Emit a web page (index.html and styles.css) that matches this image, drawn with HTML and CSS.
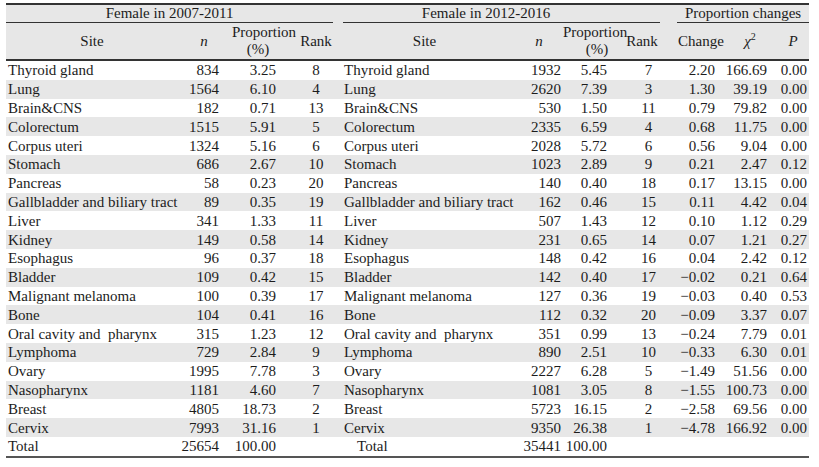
FILE: index.html
```html
<!DOCTYPE html>
<html>
<head>
<meta charset="utf-8">
<link rel="stylesheet" href="styles.css">
</head>
<body>
<table class="tbl">
<colgroup>
<col class="w1"><col class="w2"><col class="w3"><col class="w4">
<col class="w5"><col class="w6"><col class="w7"><col class="w8">
<col class="w9"><col class="w10"><col class="w11">
</colgroup>
<thead>
<tr class="grp">
<th colspan="4"><div class="rule g1">Female in 2007-2011</div></th>
<th colspan="4"><div class="rule g2">Female in 2012-2016</div></th>
<th colspan="3"><div class="rule g3">Proportion changes</div></th>
</tr>
<tr class="hdr">
<th>Site</th>
<th><i>n</i></th>
<th>Proportion<span class="pct pct-l">(%)</span></th>
<th>Rank</th>
<th>Site</th>
<th><i>n</i></th>
<th>Proportion<span class="pct pct-r">(%)</span></th>
<th>Rank</th>
<th>Change</th>
<th><i>χ</i><sup>2</sup></th>
<th><i>P</i></th>
</tr>
</thead>
<tbody>
<tr><td>Thyroid gland</td><td>834</td><td>3.25</td><td>8</td><td>Thyroid gland</td><td>1932</td><td>5.45</td><td>7</td><td>2.20</td><td>166.69</td><td>0.00</td></tr>
<tr><td>Lung</td><td>1564</td><td>6.10</td><td>4</td><td>Lung</td><td>2620</td><td>7.39</td><td>3</td><td>1.30</td><td>39.19</td><td>0.00</td></tr>
<tr><td>Brain&amp;CNS</td><td>182</td><td>0.71</td><td>13</td><td>Brain&amp;CNS</td><td>530</td><td>1.50</td><td>11</td><td>0.79</td><td>79.82</td><td>0.00</td></tr>
<tr><td>Colorectum</td><td>1515</td><td>5.91</td><td>5</td><td>Colorectum</td><td>2335</td><td>6.59</td><td>4</td><td>0.68</td><td>11.75</td><td>0.00</td></tr>
<tr><td>Corpus uteri</td><td>1324</td><td>5.16</td><td>6</td><td>Corpus uteri</td><td>2028</td><td>5.72</td><td>6</td><td>0.56</td><td>9.04</td><td>0.00</td></tr>
<tr><td>Stomach</td><td>686</td><td>2.67</td><td>10</td><td>Stomach</td><td>1023</td><td>2.89</td><td>9</td><td>0.21</td><td>2.47</td><td>0.12</td></tr>
<tr><td>Pancreas</td><td>58</td><td>0.23</td><td>20</td><td>Pancreas</td><td>140</td><td>0.40</td><td>18</td><td>0.17</td><td>13.15</td><td>0.00</td></tr>
<tr><td>Gallbladder and biliary tract</td><td>89</td><td>0.35</td><td>19</td><td>Gallbladder and biliary tract</td><td>162</td><td>0.46</td><td>15</td><td>0.11</td><td>4.42</td><td>0.04</td></tr>
<tr><td>Liver</td><td>341</td><td>1.33</td><td>11</td><td>Liver</td><td>507</td><td>1.43</td><td>12</td><td>0.10</td><td>1.12</td><td>0.29</td></tr>
<tr><td>Kidney</td><td>149</td><td>0.58</td><td>14</td><td>Kidney</td><td>231</td><td>0.65</td><td>14</td><td>0.07</td><td>1.21</td><td>0.27</td></tr>
<tr><td>Esophagus</td><td>96</td><td>0.37</td><td>18</td><td>Esophagus</td><td>148</td><td>0.42</td><td>16</td><td>0.04</td><td>2.42</td><td>0.12</td></tr>
<tr><td>Bladder</td><td>109</td><td>0.42</td><td>15</td><td>Bladder</td><td>142</td><td>0.40</td><td>17</td><td>−0.02</td><td>0.21</td><td>0.64</td></tr>
<tr><td>Malignant melanoma</td><td>100</td><td>0.39</td><td>17</td><td>Malignant melanoma</td><td>127</td><td>0.36</td><td>19</td><td>−0.03</td><td>0.40</td><td>0.53</td></tr>
<tr><td>Bone</td><td>104</td><td>0.41</td><td>16</td><td>Bone</td><td>112</td><td>0.32</td><td>20</td><td>−0.09</td><td>3.37</td><td>0.07</td></tr>
<tr><td>Oral cavity and&nbsp; pharynx</td><td>315</td><td>1.23</td><td>12</td><td>Oral cavity and&nbsp; pharynx</td><td>351</td><td>0.99</td><td>13</td><td>−0.24</td><td>7.79</td><td>0.01</td></tr>
<tr><td>Lymphoma</td><td>729</td><td>2.84</td><td>9</td><td>Lymphoma</td><td>890</td><td>2.51</td><td>10</td><td>−0.33</td><td>6.30</td><td>0.01</td></tr>
<tr><td>Ovary</td><td>1995</td><td>7.78</td><td>3</td><td>Ovary</td><td>2227</td><td>6.28</td><td>5</td><td>−1.49</td><td>51.56</td><td>0.00</td></tr>
<tr><td>Nasopharynx</td><td>1181</td><td>4.60</td><td>7</td><td>Nasopharynx</td><td>1081</td><td>3.05</td><td>8</td><td>−1.55</td><td>100.73</td><td>0.00</td></tr>
<tr><td>Breast</td><td>4805</td><td>18.73</td><td>2</td><td>Breast</td><td>5723</td><td>16.15</td><td>2</td><td>−2.58</td><td>69.56</td><td>0.00</td></tr>
<tr><td>Cervix</td><td>7993</td><td>31.16</td><td>1</td><td>Cervix</td><td>9350</td><td>26.38</td><td>1</td><td>−4.78</td><td>166.92</td><td>0.00</td></tr>
<tr class="total"><td>Total</td><td>25654</td><td>100.00</td><td></td><td class="tot-r">Total</td><td>35441</td><td>100.00</td><td></td><td></td><td></td><td></td></tr>
</tbody>
</table>
</body>
</html>
```

FILE: styles.css
```css
body {
  margin: 0;
  padding: 3px 0 0 6px;
  background: #fff;
  color: #1c1c1c;
  font-family: "Liberation Serif", "Times New Roman", serif;
  font-size: 15px;
}

.tbl {
  border-collapse: separate;
  border-spacing: 0;
  table-layout: fixed;
  width: 803px;
}

.w1 { width: 172px; }
.w2 { width: 52px; }
.w3 { width: 68px; }
.w4 { width: 36px; }
.w5 { width: 181px; }
.w6 { width: 48px; }
.w7 { width: 62px; }
.w8 { width: 47px; }
.w9 { width: 50px; }
.w10 { width: 48px; }
.w11 { width: 39px; }

.tbl thead {
  background: #e7e7e7;
}

.tbl th {
  font-weight: normal;
  padding: 0;
  white-space: nowrap;
  text-align: center;
}

.grp th {
  border-top: 2px solid #333;
  height: 18px;
  vertical-align: top;
}

.rule {
  line-height: 17px;
  border-bottom: 1px solid #333;
}

.g1 { margin-right: 1px; }
.g2 { margin-left: 9px; margin-right: 12px; padding-right: 31px; }
.g3 { margin-left: 5px; }

.hdr th {
  height: 36px;
  line-height: 17px;
  vertical-align: middle;
  border-bottom: 2px solid #333;
}

.hdr th:nth-child(8) { padding-right: 13px; }
.hdr th:nth-child(9) { padding-left: 6px; }
.hdr th:nth-child(10) { padding-left: 8px; }
.hdr th:nth-child(11) { padding-left: 7px; }

.pct {
  display: block;
}
.pct-l { padding-right: 12px; }
.pct-r { padding-left: 6px; }

.hdr sup {
  font-size: 10px;
  line-height: 0;
  vertical-align: 6px;
}

.tbl td {
  height: 18.8px;
  padding: 0;
  line-height: 16px;
  white-space: nowrap;
  text-align: right;
}

.tbl tbody tr:nth-child(even) {
  background: #e7e7e7;
}

.tbl td:nth-child(1) { text-align: left; padding-left: 2px; }
.tbl td:nth-child(2) { padding-right: 11px; }
.tbl td:nth-child(3) { padding-right: 22px; }
.tbl td:nth-child(4) { text-align: center; }
.tbl td:nth-child(5) { text-align: left; padding-left: 10px; }
.tbl td:nth-child(6) { padding-right: 2px; }
.tbl td:nth-child(7) { padding-right: 18px; }
.tbl td:nth-child(8) { text-align: center; }
.tbl td:nth-child(9) { padding-right: 7px; }
.tbl td:nth-child(10) { padding-right: 3px; }
.tbl td:nth-child(11) { padding-right: 2px; }

.tbl td.tot-r { padding-left: 23px; }

.total td {
  border-bottom: 2px solid #555;
}
```
